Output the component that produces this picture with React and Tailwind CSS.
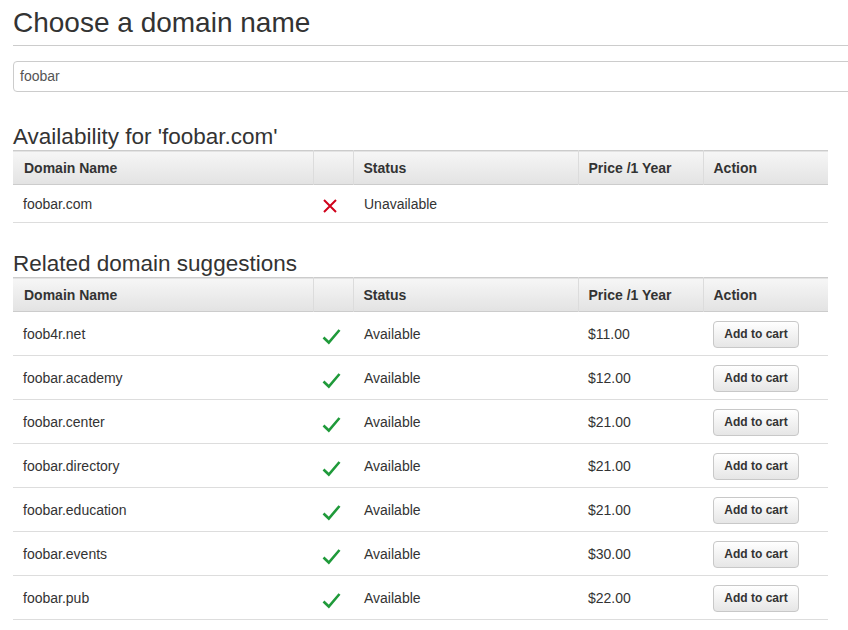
import React from "react";

const suggestions = [
  { name: "foob4r.net", price: "$11.00" },
  { name: "foobar.academy", price: "$12.00" },
  { name: "foobar.center", price: "$21.00" },
  { name: "foobar.directory", price: "$21.00" },
  { name: "foobar.education", price: "$21.00" },
  { name: "foobar.events", price: "$30.00" },
  { name: "foobar.pub", price: "$22.00" },
];

function Check() {
  return (
    <svg width="19" height="17" viewBox="0 0 19 17">
      <path d="M1.5 9.5 L6.8 14.5 L17.5 2" fill="none" stroke="#1f9a3a" strokeWidth="2.6" strokeLinejoin="miter" />
    </svg>
  );
}

function Cross() {
  return (
    <svg width="14" height="14" viewBox="0 0 14 14">
      <path d="M1 1 L13 13 M13 1 L1 13" stroke="#d0021b" strokeWidth="2" />
    </svg>
  );
}

function HeadRow() {
  return (
    <tr className="h-[34px] bg-gradient-to-b from-[#f6f6f6] to-[#e3e3e3] border-y border-[#ccc] text-left font-bold">
      <th className="w-[300px] pl-[11px] pt-[2px]">Domain Name</th>
      <th className="w-[40px] border-l border-[#dcdcdc]"></th>
      <th className="w-[225px] pl-[10px] pt-[2px] border-l border-[#dcdcdc]">Status</th>
      <th className="w-[125px] pl-[10px] pt-[2px] border-l border-[#dcdcdc]">Price /1 Year</th>
      <th className="w-[125px] pl-[10px] pt-[2px] border-l border-[#dcdcdc]">Action</th>
    </tr>
  );
}

export default function App() {
  return (
    <div className="h-[630px] w-full overflow-hidden bg-white text-[#333] font-['Liberation_Sans',Arial,sans-serif]">
      <div className="pl-[13px] w-[900px]">
        <h1 className="text-[28px] leading-[36px] pt-[5px] pb-[4px] border-b border-[#ccc]">Choose a domain name</h1>
        <div className="mt-[15px] h-[31px] border border-[#ccc] rounded-[4px] flex items-center pl-[6px] text-[14px] text-[#555]">
          foobar
        </div>

        <h2 className="text-[22.5px] leading-[28px] mt-[31px]">Availability for 'foobar.com'</h2>
        <table className="w-[815px] table-fixed border-collapse text-[14px] mt-[-1px]">
          <thead>
            <HeadRow />
          </thead>
          <tbody>
            <tr className="h-[38px] border-b border-[#ddd]">
              <td className="pl-[10px] pt-[2px]">foobar.com</td>
              <td className="pl-[10px] pt-[5px]"><Cross /></td>
              <td className="pl-[11px] pt-[2px]">Unavailable</td>
              <td></td>
              <td></td>
            </tr>
          </tbody>
        </table>

        <h2 className="text-[22.5px] leading-[28px] mt-[27px]">Related domain suggestions</h2>
        <table className="w-[815px] table-fixed border-collapse text-[14px] mt-[-1px]">
          <thead>
            <HeadRow />
          </thead>
          <tbody>
            {suggestions.map((s) => (
              <tr key={s.name} className="h-[44px] border-b border-[#ddd]">
                <td className="pl-[10px] pt-[2px]">{s.name}</td>
                <td className="pl-[9px] pt-[5px]"><Check /></td>
                <td className="pl-[11px] pt-[2px]">Available</td>
                <td className="pl-[10px] pt-[2px]">{s.price}</td>
                <td className="pl-[10px] pt-[1px]">
                  <button className="w-[86px] h-[27px] rounded-[4px] border border-[#c8c8c8] bg-gradient-to-b from-white to-[#e6e6e6] text-[12px] font-bold text-[#333]">
                    Add to cart
                  </button>
                </td>
              </tr>
            ))}
          </tbody>
        </table>
      </div>
    </div>
  );
}
